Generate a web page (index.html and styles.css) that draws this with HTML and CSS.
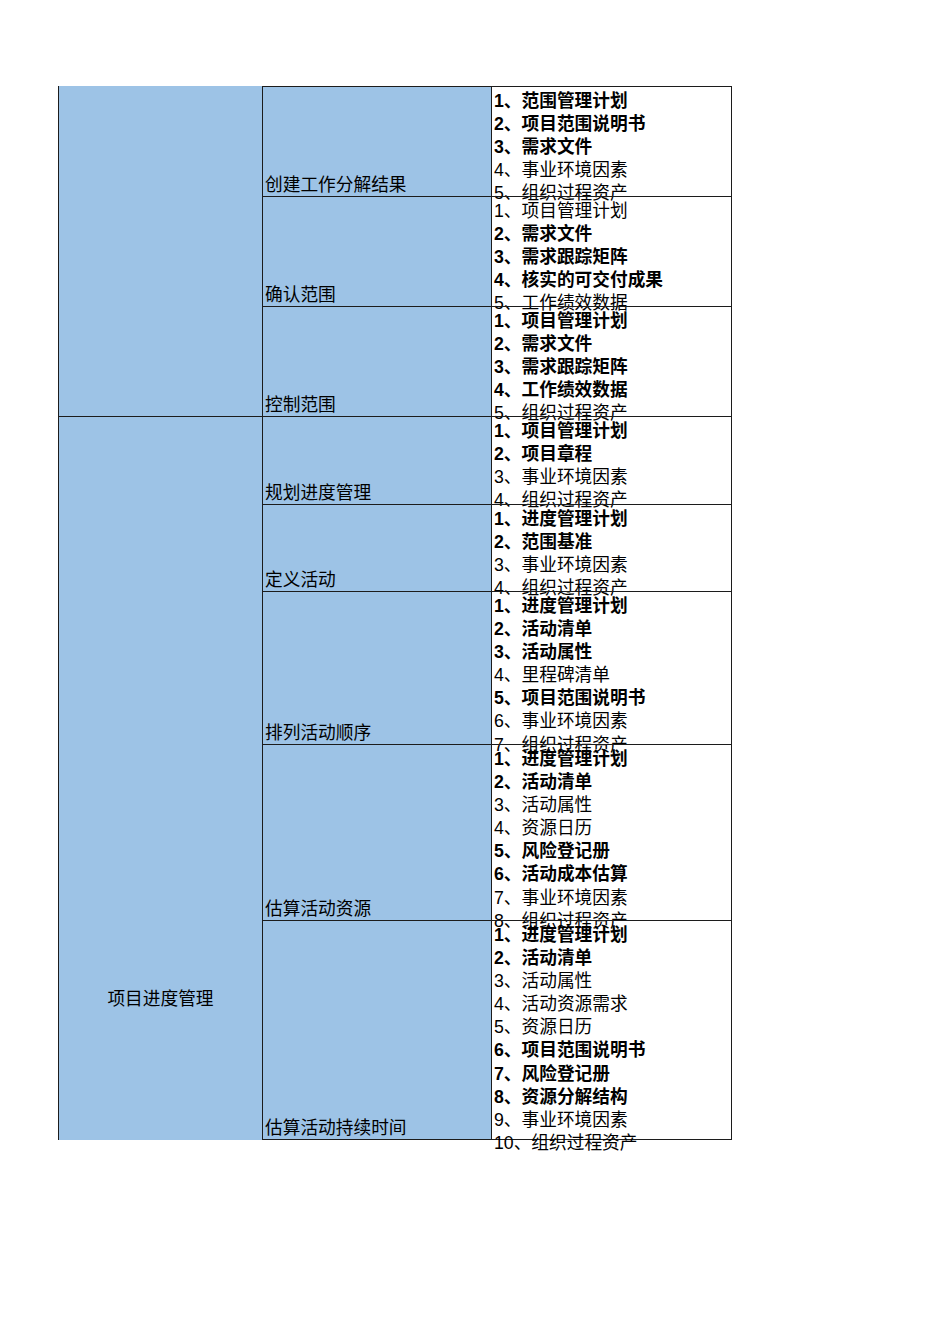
FILE: index.html
```html
<!DOCTYPE html>
<html lang="zh-CN">
<head>
<meta charset="utf-8">
<title>项目管理过程输入</title>
<link rel="stylesheet" href="styles.css">
</head>
<body>
<div class="sheet">
  <div class="area area-first"></div>
  <div class="area area-second"><span>项目进度管理</span></div>

  <div class="proc r1">创建工作分解结果</div>
  <div class="inputs r1">
    <div class="b">1、范围管理计划</div>
    <div class="b">2、项目范围说明书</div>
    <div class="b">3、需求文件</div>
    <div>4、事业环境因素</div>
    <div>5、组织过程资产</div>
  </div>

  <div class="proc r2">确认范围</div>
  <div class="inputs r2">
    <div>1、项目管理计划</div>
    <div class="b">2、需求文件</div>
    <div class="b">3、需求跟踪矩阵</div>
    <div class="b">4、核实的可交付成果</div>
    <div>5、工作绩效数据</div>
  </div>

  <div class="proc r3">控制范围</div>
  <div class="inputs r3">
    <div class="b">1、项目管理计划</div>
    <div class="b">2、需求文件</div>
    <div class="b">3、需求跟踪矩阵</div>
    <div class="b">4、工作绩效数据</div>
    <div>5、组织过程资产</div>
  </div>

  <div class="proc r4">规划进度管理</div>
  <div class="inputs r4">
    <div class="b">1、项目管理计划</div>
    <div class="b">2、项目章程</div>
    <div>3、事业环境因素</div>
    <div>4、组织过程资产</div>
  </div>

  <div class="proc r5">定义活动</div>
  <div class="inputs r5">
    <div class="b">1、进度管理计划</div>
    <div class="b">2、范围基准</div>
    <div>3、事业环境因素</div>
    <div>4、组织过程资产</div>
  </div>

  <div class="proc r6">排列活动顺序</div>
  <div class="inputs r6">
    <div class="b">1、进度管理计划</div>
    <div class="b">2、活动清单</div>
    <div class="b">3、活动属性</div>
    <div>4、里程碑清单</div>
    <div class="b">5、项目范围说明书</div>
    <div>6、事业环境因素</div>
    <div>7、组织过程资产</div>
  </div>

  <div class="proc r7">估算活动资源</div>
  <div class="inputs r7">
    <div class="b">1、进度管理计划</div>
    <div class="b">2、活动清单</div>
    <div>3、活动属性</div>
    <div>4、资源日历</div>
    <div class="b">5、风险登记册</div>
    <div class="b">6、活动成本估算</div>
    <div>7、事业环境因素</div>
    <div>8、组织过程资产</div>
  </div>

  <div class="proc r8 last">估算活动持续时间</div>
  <div class="inputs r8 last">
    <div class="b">1、进度管理计划</div>
    <div class="b">2、活动清单</div>
    <div>3、活动属性</div>
    <div>4、活动资源需求</div>
    <div>5、资源日历</div>
    <div class="b">6、项目范围说明书</div>
    <div class="b">7、风险登记册</div>
    <div class="b">8、资源分解结构</div>
    <div>9、事业环境因素</div>
    <div>10、组织过程资产</div>
  </div>
</div>
</body>
</html>
```

FILE: styles.css
```css
html, body {
  margin: 0;
  padding: 0;
  background: #ffffff;
}

body {
  min-height: 1344px;
  font-family: "Liberation Sans", "Noto Sans CJK SC", sans-serif;
  font-size: 17.7px;
  line-height: 23.1px;
  color: #000000;
}

.sheet {
  margin: 86px 0 0 58px;
  width: 674px;
  padding-bottom: 40px;
  display: grid;
  grid-template-columns: 204px 229px 241px;
  grid-template-rows: 110px 110px 110px 88px 87px 153px 176px 220px;
}

.area {
  grid-column: 1;
  background: #9dc3e6;
  border-left: 1px solid #1c1c1c;
  box-sizing: border-box;
}

.area-first {
  grid-row: 1 / 4;
}

.area-second {
  grid-row: 4 / 9;
  border-top: 1px solid #1c1c1c;
  text-align: center;
  padding-top: 571px;
}

.proc {
  grid-column: 2;
  background: #9dc3e6;
  border-left: 1px solid #1c1c1c;
  border-top: 1px solid #1c1c1c;
  box-sizing: border-box;
  padding-left: 2px;
  display: flex;
  align-items: flex-end;
  line-height: 22px;
}

.inputs {
  grid-column: 3;
  border-left: 1px solid #1c1c1c;
  border-top: 1px solid #1c1c1c;
  border-right: 1px solid #1c1c1c;
  box-sizing: border-box;
  padding: 3px 0 0 2px;
  overflow: visible;
  white-space: nowrap;
}

.last {
  border-bottom: 1px solid #1c1c1c;
}

.r1 { grid-row: 1; }
.r2 { grid-row: 2; }
.r3 { grid-row: 3; }
.r4 { grid-row: 4; }
.r5 { grid-row: 5; }
.r6 { grid-row: 6; }
.r7 { grid-row: 7; }
.r8 { grid-row: 8; }

.b {
  font-weight: 700;
}
```
